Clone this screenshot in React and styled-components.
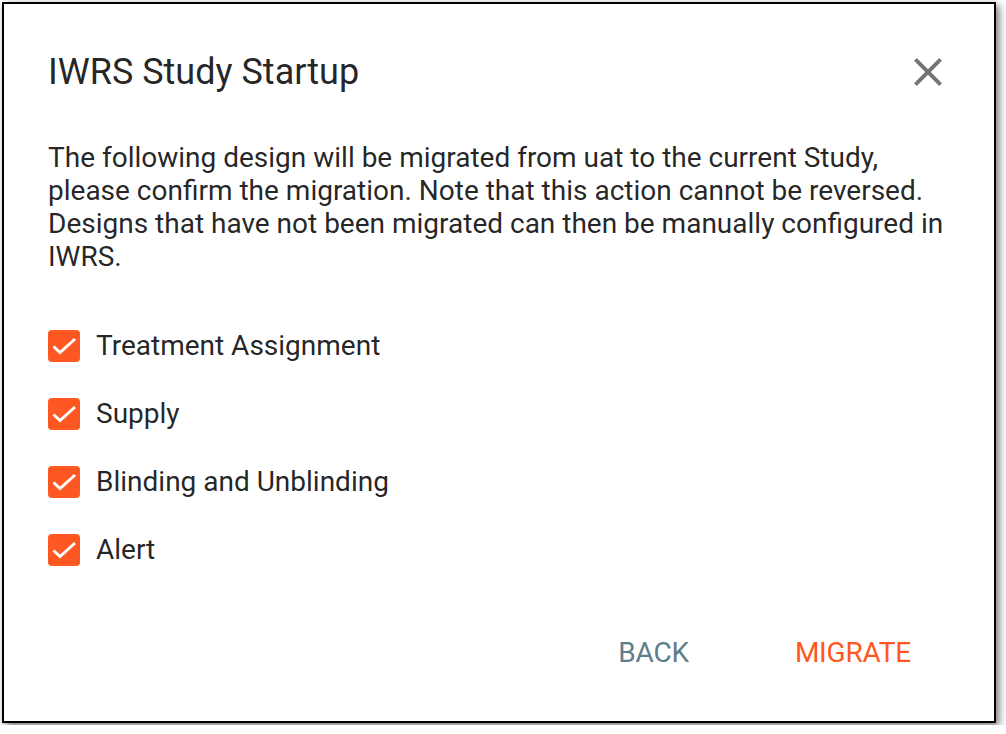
import React, { useState } from 'react';
import styled, { createGlobalStyle } from 'styled-components';

const GlobalStyle = createGlobalStyle`
  * { box-sizing: border-box; }
  body {
    margin: 0;
    padding: 2px;
    background: #ffffff;
    font-family: Roboto, "Liberation Sans", Arial, sans-serif;
  }
`;

const Frame = styled.div`
  width: 994px;
  height: 721px;
  border: 2px solid #000;
  background: #fff;
  box-shadow: 3px 3px 8px rgba(0, 0, 0, 0.55);
  display: flex;
  flex-direction: column;
  padding: 44px 44px 0 44px;
`;

const Header = styled.div`
  display: flex;
  align-items: center;
  justify-content: space-between;
  margin-right: -2px;
`;

const Title = styled.h2`
  margin: 0;
  font-size: 36px;
  font-weight: 400;
  line-height: 48px;
  color: rgba(0, 0, 0, 0.87);
`;

const Close = styled.button`
  border: none;
  background: transparent;
  padding: 0;
  width: 48px;
  height: 48px;
  display: grid;
  place-items: center;
  cursor: pointer;
  color: #757575;
`;

const Text = styled.p`
  margin: 45px 0 0;
  font-size: 28px;
  line-height: 33px;
  color: rgba(0, 0, 0, 0.87);
`;

const List = styled.div`
  display: flex;
  flex-direction: column;
  gap: 36px;
  margin-top: 57px;
`;

const Row = styled.label`
  display: flex;
  align-items: center;
  gap: 16px;
  font-size: 28px;
  line-height: 32px;
  color: rgba(0, 0, 0, 0.87);
  cursor: pointer;
`;

const Box = styled.span`
  width: 32px;
  height: 32px;
  border-radius: 4px;
  background: ${({ checked }) => (checked ? '#ff5722' : '#fff')};
  border: ${({ checked }) => (checked ? 'none' : '2px solid #757575')};
  display: grid;
  place-items: center;
  flex-shrink: 0;
`;

const Actions = styled.div`
  margin-top: auto;
  margin-bottom: 48px;
  padding-right: 39px;
  display: flex;
  justify-content: flex-end;
  gap: 106px;
`;

const Button = styled.button`
  border: none;
  background: transparent;
  padding: 0;
  font-family: inherit;
  font-size: 28px;
  font-weight: 400;
  line-height: 40px;
  letter-spacing: -0.2px;
  text-transform: uppercase;
  color: ${({ primary }) => (primary ? '#ff5722' : '#607d8b')};
  cursor: pointer;
`;

const items = ['Treatment Assignment', 'Supply', 'Blinding and Unblinding', 'Alert'];

const App = () => {
  const [checked, setChecked] = useState(items.map(() => true));

  const toggle = (i) => setChecked((prev) => prev.map((c, j) => (j === i ? !c : c)));

  return (
    <>
      <GlobalStyle />
      <Frame>
        <Header>
          <Title>IWRS Study Startup</Title>
          <Close aria-label="close">
            <svg width="48" height="48" viewBox="0 0 24 24">
              <path
                fill="currentColor"
                d="M19 6.41 17.59 5 12 10.59 6.41 5 5 6.41 10.59 12 5 17.59 6.41 19 12 13.41 17.59 19 19 17.59 13.41 12z"
              />
            </svg>
          </Close>
        </Header>
        <Text>
          The following design will be migrated from uat to the current Study, please confirm the
          migration. Note that this action cannot be reversed. Designs that have not been migrated
          can then be manually configured in IWRS.
        </Text>
        <List>
          {items.map((name, i) => (
            <Row key={name} onClick={() => toggle(i)}>
              <Box checked={checked[i]}>
                {checked[i] && (
                  <svg width="32" height="32" viewBox="0 0 32 32">
                    <path d="M5.5 16.5 12 22.5 27 9" fill="none" stroke="#fff" strokeWidth="3" />
                  </svg>
                )}
              </Box>
              {name}
            </Row>
          ))}
        </List>
        <Actions>
          <Button>Back</Button>
          <Button primary>Migrate</Button>
        </Actions>
      </Frame>
    </>
  );
};

export default App;
